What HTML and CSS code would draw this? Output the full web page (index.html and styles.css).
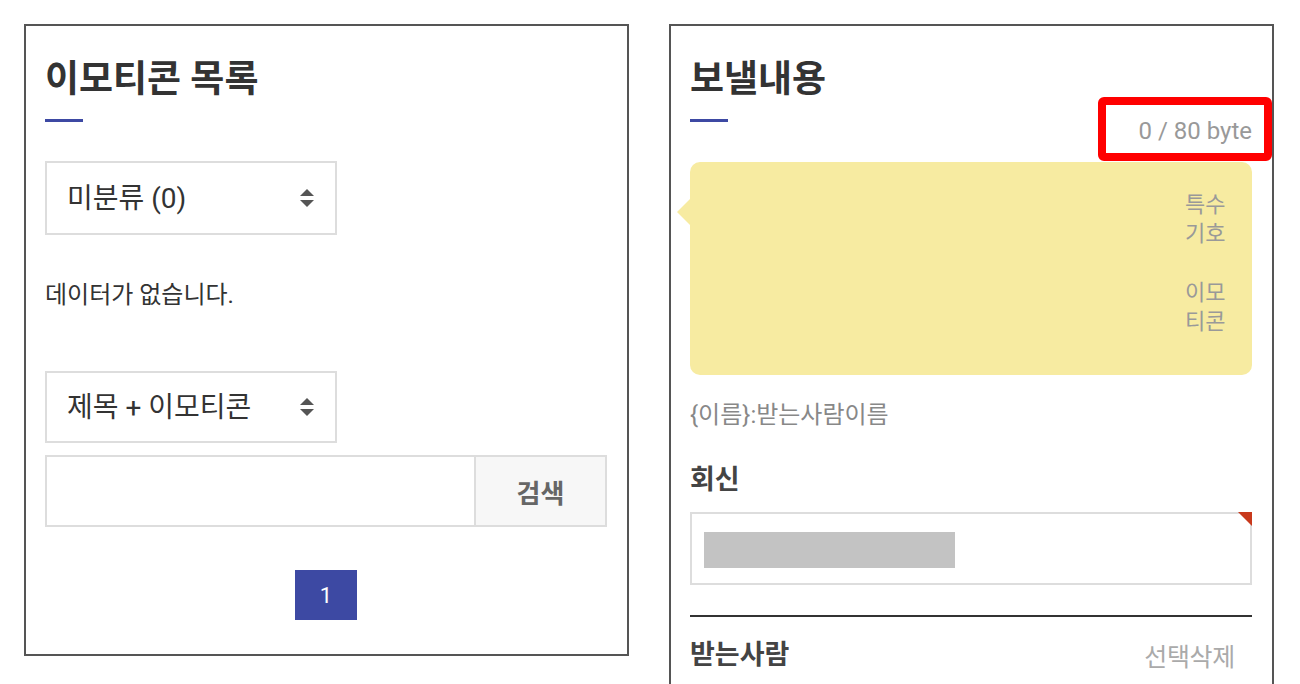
FILE: index.html
```html
<!DOCTYPE html>
<html lang="ko">
<head>
    <meta charset="UTF-8">
    <meta name="viewport" content="width=device-width, initial-scale=1.0">
    <title>문자 보내기</title>
    <link rel="stylesheet" href="styles.css">
</head>
<body>

    <div class="page">
        <section class="panel panel-list">
            <h2 class="panel-title">이모티콘 목록</h2>
            <span class="title-bar"></span>

            <div class="select-box select-category">
                <select class="select">
                    <option>미분류 (0)</option>
                </select>
                <svg class="select-arrow" width="14" height="20" viewBox="0 0 14 20">
                    <polygon points="0,8 7,1 14,8" />
                    <polygon points="0,12 14,12 7,19" />
                </svg>
            </div>

            <p class="empty">데이터가 없습니다.</p>

            <div class="select-box select-field">
                <select class="select">
                    <option>제목 + 이모티콘</option>
                </select>
                <svg class="select-arrow" width="14" height="20" viewBox="0 0 14 20">
                    <polygon points="0,8 7,1 14,8" />
                    <polygon points="0,12 14,12 7,19" />
                </svg>
            </div>

            <form class="search" onsubmit="return false">
                <input type="text" class="search-input">
                <button class="search-btn">검색</button>
            </form>

            <div class="paging">
                <a class="page-num active">1</a>
            </div>
        </section>

        <section class="panel panel-send">
            <h2 class="panel-title">보낼내용</h2>
            <div class="sub-row">
                <span class="title-bar"></span>
                <span class="byte"><span id="byteCount">0</span> / 80 byte</span>
            </div>

            <div class="msg-box">
                <textarea class="msg-text" id="msgText"></textarea>
                <div class="msg-tools">
                    <button class="tool-btn">특수기호</button>
                    <button class="tool-btn">이모티콘</button>
                </div>
            </div>

            <p class="hint">{이름}:받는사람이름</p>

            <h3 class="field-title">회신</h3>
            <div class="reply-box">
                <span class="reply-num"></span>
            </div>

            <div class="recv-head">
                <h3 class="field-title">받는사람</h3>
                <button class="del-btn">선택삭제</button>
            </div>
            <div class="recv-list"></div>
        </section>
    </div>

    <script>
        const msgText = document.getElementById('msgText');
        const byteCount = document.getElementById('byteCount');

        function getBytes(str) {
            let bytes = 0;
            for (let i = 0; i < str.length; i++) {
                bytes += str.charCodeAt(i) > 127 ? 2 : 1;
            }
            return bytes;
        }

        msgText.addEventListener('input', function () {
            byteCount.textContent = getBytes(msgText.value);
        });
    </script>

</body>
</html>
```

FILE: styles.css
```css
html, body {
    height: 100%;
    overflow: hidden;
}
body {
    margin: 0;
    font-family: Roboto, "Noto Sans CJK KR", sans-serif;
    color: #333;
    background-color: #fff;
}
.page {
    display: flex;
    align-items: flex-start;
    gap: 40px;
    padding: 24px 0 0 24px;
}
.panel {
    width: 605px;
    box-sizing: border-box;
    border: 2px solid #555;
    padding: 32px 20px 34px 19px;
    display: flex;
    flex-direction: column;
    align-items: flex-start;
}
.panel-send {
    align-items: stretch;
    padding-bottom: 120px;
}
.panel-title {
    margin: 0;
    font-size: 37px;
    line-height: 44px;
    font-weight: 700;
    color: #333;
}
.title-bar {
    display: block;
    width: 38px;
    height: 3px;
    margin-top: 17px;
    background-color: #3d49a3;
}

/* select */
.select-box {
    position: relative;
    width: 292px;
    margin-top: 39px;
}
.select {
    appearance: none;
    -webkit-appearance: none;
    width: 100%;
    height: 74px;
    box-sizing: border-box;
    border: 2px solid #ddd;
    border-radius: 0;
    background-color: #fff;
    padding: 0 20px;
    font-family: inherit;
    font-size: 28px;
    color: #333;
}
.select-arrow {
    position: absolute;
    right: 23px;
    top: 27px;
    fill: #555;
    pointer-events: none;
}
.select-field {
    margin-top: 58px;
}
.select-field .select {
    height: 72px;
}
.select-field .select-arrow {
    top: 26px;
}
.empty {
    margin: 42px 0 0;
    font-size: 24px;
    line-height: 36px;
    color: #333;
}

/* search */
.search {
    display: flex;
    width: 100%;
    height: 72px;
    margin: 12px 0 0;
    box-sizing: border-box;
    border: 2px solid #ddd;
}
.search-input {
    flex: 1;
    border: none;
    padding: 0 16px;
    font-size: 24px;
    outline: none;
}
.search-btn {
    width: 131px;
    border: none;
    border-left: 2px solid #ddd;
    background-color: #f7f7f7;
    font-family: inherit;
    font-size: 26px;
    font-weight: 700;
    color: #666;
    cursor: pointer;
}

/* paging */
.paging {
    align-self: stretch;
    display: flex;
    justify-content: center;
    margin-top: 43px;
}
.page-num {
    display: flex;
    align-items: center;
    justify-content: center;
    width: 62px;
    height: 50px;
    font-size: 22px;
    color: #333;
}
.page-num.active {
    background-color: #3d49a3;
    color: #fff;
}

/* send */
.sub-row {
    display: flex;
    justify-content: space-between;
    align-items: flex-start;
}
.byte {
    position: relative;
    margin-top: 17px;
    font-size: 24px;
    line-height: 24px;
    color: #999;
}
.byte::after {
    content: '';
    position: absolute;
    top: -22px;
    bottom: -18px;
    left: -40px;
    right: -20px;
    border: 8px solid #ff0000;
    border-radius: 6px;
}
.msg-box {
    position: relative;
    display: flex;
    height: 213px;
    margin-top: 19px;
    background-color: #f7eba1;
    border-radius: 10px;
}
.msg-box::before {
    content: '';
    position: absolute;
    left: -13px;
    top: 37px;
    border-top: 13px solid transparent;
    border-bottom: 13px solid transparent;
    border-right: 13px solid #f7eba1;
}
.msg-text {
    flex: 1;
    border: none;
    background: transparent;
    resize: none;
    outline: none;
    padding: 20px;
    font-family: inherit;
    font-size: 24px;
}
.msg-tools {
    display: flex;
    flex-direction: column;
    gap: 30px;
    width: 44px;
    margin-right: 23px;
    padding-top: 28px;
}
.tool-btn {
    width: 44px;
    padding: 0;
    border: none;
    background: none;
    font-family: inherit;
    font-size: 22px;
    line-height: 29px;
    text-align: left;
    color: #999;
    cursor: pointer;
}
.hint {
    margin: 25px 0 0;
    font-size: 24px;
    line-height: 30px;
    color: #888;
}
.field-title {
    margin: 34px 0 0;
    font-size: 27px;
    line-height: 32px;
    font-weight: 700;
    color: #444;
}
.reply-box {
    position: relative;
    height: 73px;
    margin-top: 16px;
    box-sizing: border-box;
    border: 2px solid #ddd;
    padding: 18px 12px;
}
.reply-box::after {
    content: '';
    position: absolute;
    top: -2px;
    right: -2px;
    border-top: 14px solid #c8391c;
    border-left: 14px solid transparent;
}
.reply-num {
    display: block;
    width: 251px;
    height: 36px;
    background-color: #c3c3c3;
}
.recv-head {
    display: flex;
    justify-content: space-between;
    align-items: center;
    margin-top: 30px;
    padding-top: 20px;
    border-top: 2px solid #333;
}
.recv-head .field-title {
    margin: 0;
    line-height: 36px;
}
.del-btn {
    margin-right: 17px;
    padding: 0;
    border: none;
    background: none;
    font-family: inherit;
    font-size: 25px;
    letter-spacing: -0.3px;
    color: #aaa;
    cursor: pointer;
}
.recv-list {
    min-height: 120px;
}
```
